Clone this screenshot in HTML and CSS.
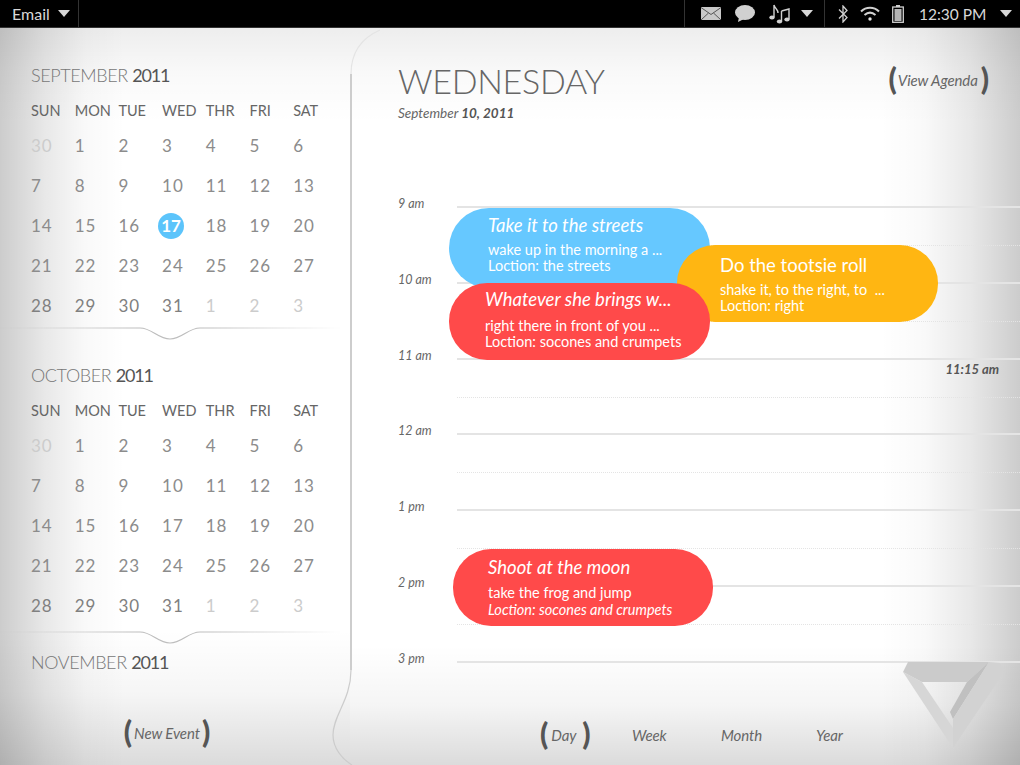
FILE: index.html
```html
<!DOCTYPE html>
<html lang="en">
<head>
    <meta charset="UTF-8">
    <title>Calendar</title>
    <link rel="stylesheet" href="styles.css">
</head>
<body>

<div class="statusbar">
    <div class="app-menu">
        <span>Email</span>
        <i class="caret"></i>
    </div>
    <div class="notifications">
        <svg class="icon" width="20" height="13" viewBox="0 0 20 13">
            <rect width="20" height="13" fill="#c9c9c9"/>
            <path d="M0 0.5 L10 7.5 L20 0.5 M0 13 L7.5 6 M20 13 L12.5 6" fill="none" stroke="#555" stroke-width="1"/>
        </svg>
        <svg class="icon" width="20" height="17" viewBox="0 0 20 17">
            <ellipse cx="10" cy="7.5" rx="10" ry="7.5" fill="#d0d0d0"/>
            <path d="M4 12 L3 17 L9 14 Z" fill="#d0d0d0"/>
        </svg>
        <svg class="icon" width="21" height="20" viewBox="0 0 21 20">
            <path d="M5 1 V13 M5 1 C6 5 9 5 9 9 M12.5 7 L20 5 V15 M12.5 7 V17" fill="none" stroke="#d0d0d0" stroke-width="1.4"/>
            <ellipse cx="3" cy="13.5" rx="2.7" ry="2" fill="#d0d0d0"/>
            <ellipse cx="10.5" cy="17.5" rx="2.7" ry="2" fill="#d0d0d0"/>
            <ellipse cx="18" cy="15.5" rx="2.7" ry="2" fill="#d0d0d0"/>
        </svg>
        <i class="caret"></i>
    </div>
    <div class="system">
        <svg class="icon" width="10" height="18" viewBox="0 0 10 18">
            <path d="M1 4.5 L9 12.5 L5 17 V1 L9 5.5 L1 13.5" fill="none" stroke="#d0d0d0" stroke-width="1.3"/>
        </svg>
        <svg class="icon" width="20" height="15" viewBox="0 0 20 15">
            <path d="M1 5.5 C6 0.5 14 0.5 19 5.5" fill="none" stroke="#d0d0d0" stroke-width="2"/>
            <path d="M4.5 9 C8 6 12 6 15.5 9" fill="none" stroke="#d0d0d0" stroke-width="2"/>
            <circle cx="10" cy="13" r="1.7" fill="#e6e6e6"/>
        </svg>
        <svg class="icon" width="12" height="18" viewBox="0 0 12 18">
            <rect x="4" y="0" width="4" height="2" fill="#d0d0d0"/>
            <rect x="0.7" y="2" width="10.6" height="15.3" fill="none" stroke="#d0d0d0" stroke-width="1.3"/>
            <rect x="2.5" y="4" width="7" height="12" fill="#b5b5b5"/>
        </svg>
        <span class="clock">12:30 PM</span>
        <i class="caret"></i>
    </div>
</div>

<div class="content">
    <div class="sidebar">
        <div class="calendar">
            <div class="month">SEPTEMBER <b>2011</b></div>
            <div class="weekdays">
                <span>SUN</span><span>MON</span><span>TUE</span><span>WED</span><span>THR</span><span>FRI</span><span>SAT</span>
            </div>
            <div class="days">
                <span class="muted">30</span><span>1</span><span>2</span><span>3</span><span>4</span><span>5</span><span>6</span>
                <span>7</span><span>8</span><span>9</span><span>10</span><span>11</span><span>12</span><span>13</span>
                <span>14</span><span>15</span><span>16</span><span class="today">17</span><span>18</span><span>19</span><span>20</span>
                <span>21</span><span>22</span><span>23</span><span>24</span><span>25</span><span>26</span><span>27</span>
                <span class="dark">28</span><span class="dark">29</span><span class="dark">30</span><span class="dark">31</span><span class="muted">1</span><span class="muted">2</span><span class="muted">3</span>
            </div>
            <svg class="divider" width="340" height="14" viewBox="0 0 340 14">
                <path d="M0 2 H140 C152 2 158 13 170 13 C182 13 188 2 200 2 H340" fill="none" stroke="#bdbdbd" stroke-width="1.2"/>
            </svg>
        </div>
        <div class="calendar">
            <div class="month">OCTOBER <b>2011</b></div>
            <div class="weekdays">
                <span>SUN</span><span>MON</span><span>TUE</span><span>WED</span><span>THR</span><span>FRI</span><span>SAT</span>
            </div>
            <div class="days">
                <span class="muted">30</span><span>1</span><span>2</span><span>3</span><span>4</span><span>5</span><span>6</span>
                <span>7</span><span>8</span><span>9</span><span>10</span><span>11</span><span>12</span><span>13</span>
                <span>14</span><span>15</span><span>16</span><span>17</span><span>18</span><span>19</span><span>20</span>
                <span>21</span><span>22</span><span>23</span><span>24</span><span>25</span><span>26</span><span>27</span>
                <span class="dark">28</span><span class="dark">29</span><span class="dark">30</span><span class="dark">31</span><span class="muted">1</span><span class="muted">2</span><span class="muted">3</span>
            </div>
            <svg class="divider divider-low" width="340" height="14" viewBox="0 0 340 14">
                <path d="M0 2 H140 C152 2 158 13 170 13 C182 13 188 2 200 2 H340" fill="none" stroke="#bdbdbd" stroke-width="1.2"/>
            </svg>
        </div>
        <div class="month month-last">NOVEMBER <b>2011</b></div>
        <div class="new-event">
            <a class="pill"><span class="paren">(</span>New Event<span class="paren">)</span></a>
        </div>
    </div>

    <div class="main">
        <div class="day-header">
            <div>
                <h1>WEDNESDAY</h1>
                <div class="date">September <b>10, 2011</b></div>
            </div>
            <a class="pill"><span class="paren">(</span>View Agenda<span class="paren">)</span></a>
        </div>

        <div class="timeline">
            <div class="hour"><span class="hour-label">9 am</span><div class="hour-track"><div class="half"></div></div></div>
            <div class="hour"><span class="hour-label">10 am</span><div class="hour-track"><div class="half"></div></div></div>
            <div class="hour"><span class="hour-label">11 am</span><div class="hour-track"><div class="half"></div></div></div>
            <div class="hour"><span class="hour-label">12 am</span><div class="hour-track"><div class="half"></div></div></div>
            <div class="hour"><span class="hour-label">1 pm</span><div class="hour-track"><div class="half"></div></div></div>
            <div class="hour"><span class="hour-label">2 pm</span><div class="hour-track"><div class="half"></div></div></div>
            <div class="hour hour-last"><span class="hour-label">3 pm</span><div class="hour-track"></div></div>

            <div class="now">11:15 am</div>

            <div class="event blue ev-streets">
                <div class="event-title italic">Take it to the streets</div>
                <div>wake up in the morning a ...</div>
                <div>Loction: the streets</div>
            </div>
            <div class="event amber ev-tootsie">
                <div class="event-title">Do the tootsie roll</div>
                <div>shake it, to the right, to &nbsp;...</div>
                <div>Loction: right</div>
            </div>
            <div class="event red ev-whatever">
                <div class="event-title italic">Whatever she brings w...</div>
                <div>right there in front of you ...</div>
                <div>Loction: socones and crumpets</div>
            </div>
            <div class="event red ev-moon">
                <div class="event-title italic">Shoot at the moon</div>
                <div>take the frog and jump</div>
                <div class="italic">Loction: socones and crumpets</div>
            </div>
        </div>

        <div class="views">
            <a class="pill view-day"><span class="paren">(</span>Day<span class="paren">)</span></a>
            <a class="view-week">Week</a>
            <a class="view-month">Month</a>
            <a class="view-year">Year</a>
        </div>
    </div>

    <svg class="panel-edge" width="60" height="737" viewBox="0 0 60 737">
        <path d="M50 2 C34 9 21 22 21 46" fill="none" stroke="#e4e4e4" stroke-width="1.2"/>
        <path d="M21 46 V642" fill="none" stroke="#cdcdcd" stroke-width="2"/>
        <path d="M21 642 C21 672 3 687 3 707 C3 720 12 731 22 737" fill="none" stroke="#cccccc" stroke-width="1.2"/>
    </svg>
    <svg class="logo" width="110" height="92" viewBox="0 0 110 92">
        <polygon points="3,12 53,88 53,68 22,22" fill="#d6d6d6"/>
        <polygon points="3,12 8,2 89,2 67,22 22,22" fill="#cbcbcb"/>
        <polygon points="67,22 50,52 53,59 89,2" fill="#c0c0c0"/>
        <polygon points="89,2 100,3 104,12 53,88 53,59" fill="#d2d2d2"/>
    </svg>
</div>

</body>
</html>
```

FILE: styles.css
```css
* {
    box-sizing: border-box;
}
html, body {
    margin: 0;
    height: 765px;
    overflow: hidden;
}
body {
    font-family: Lato, "Open Sans", sans-serif;
    color: #666;
    background: #fff;
}

/* top bar */
.statusbar {
    height: 28px;
    background: #000;
    border-bottom: 1px solid #333;
    color: #d8d8d8;
    display: flex;
    align-items: center;
    font-size: 16px;
}
.app-menu {
    width: 79px;
    height: 100%;
    padding-left: 12px;
    display: flex;
    align-items: center;
    gap: 8px;
    border-right: 1px solid #333;
}
.notifications {
    margin-left: auto;
    width: 141px;
    height: 100%;
    padding-left: 16px;
    display: flex;
    align-items: center;
    gap: 14px;
    border-left: 1px solid #333;
    border-right: 1px solid #333;
}
.notifications .caret {
    margin-left: -3px;
}
.system {
    width: 195px;
    height: 100%;
    padding-left: 13px;
    display: flex;
    align-items: center;
    gap: 12px;
}
.clock {
    margin-left: 3px;
    font-size: 15.5px;
}
.system .caret {
    margin-left: 1px;
}
.caret {
    width: 0;
    height: 0;
    border-left: 6px solid transparent;
    border-right: 6px solid transparent;
    border-top: 7px solid #d8d8d8;
}
.icon {
    flex: none;
}

.content {
    position: relative;
    height: 737px;
    display: flex;
}

/* left column */
.sidebar {
    width: 350px;
    padding-top: 35px;
    background:
        linear-gradient(90deg, rgba(0,0,0,.2), rgba(0,0,0,.09) 45px, rgba(0,0,0,.025) 85px, rgba(0,0,0,0) 125px),
        linear-gradient(180deg, rgba(0,0,0,.07), rgba(0,0,0,.025) 45px, rgba(0,0,0,0) 95px),
        linear-gradient(0deg, rgba(0,0,0,.14), rgba(0,0,0,.04) 70px, rgba(0,0,0,0) 135px);
}
.calendar {
    position: relative;
    height: 300px;
    padding-left: 31px;
}
.month {
    height: 24px;
    line-height: 24px;
    font-size: 18px;
    font-weight: 300;
    color: #777;
    letter-spacing: -0.4px;
}
.month b {
    font-weight: 400;
    color: #555;
    letter-spacing: -1.2px;
}
.month-last {
    margin: -13px 0 0 31px;
}
.weekdays, .days {
    display: grid;
    grid-template-columns: repeat(7, 43.7px);
}
.weekdays {
    margin-top: 12px;
    height: 24px;
    line-height: 24px;
    font-size: 14.5px;
    color: #666;
}
.days {
    margin-top: 3px;
    grid-auto-rows: 40px;
    font-size: 17px;
    color: #8c8c8c;
    line-height: 40px;
    letter-spacing: 1px;
}
.days .dark {
    color: #808080;
}
.days .muted {
    color: #ccc;
}
.days .today {
    width: 26px;
    height: 26px;
    margin: 7px 0 0 -4px;
    border-radius: 50%;
    background: #5cc4fb;
    color: #fff;
    font-weight: 700;
    line-height: 26px;
    text-align: center;
    letter-spacing: 0;
}
.divider {
    position: absolute;
    left: 0;
    top: 263px;
    -webkit-mask-image: linear-gradient(90deg, transparent, #000 40%, #000 60%, transparent);
    mask-image: linear-gradient(90deg, transparent, #000 40%, #000 60%, transparent);
}
.divider-low {
    top: 267px;
}
.new-event {
    margin-top: 45px;
    display: flex;
    justify-content: center;
    padding-right: 16px;
}

/* bracketed links */
.pill {
    display: inline-flex;
    align-items: center;
    gap: 2px;
    font-size: 15px;
    letter-spacing: -0.1px;
    font-style: italic;
    color: #666;
    height: 28px;
}
.paren {
    font-size: 30px;
    font-style: normal;
    font-weight: 900;
    color: #555;
    line-height: 28px;
    position: relative;
    top: -2px;
}

/* right column */
.main {
    flex: 1;
    padding: 34px 0 0 48px;
    display: flex;
    flex-direction: column;
    background:
        linear-gradient(270deg, rgba(0,0,0,.2), rgba(0,0,0,.09) 50px, rgba(0,0,0,.025) 95px, rgba(0,0,0,0) 140px),
        linear-gradient(180deg, rgba(0,0,0,.07), rgba(0,0,0,.025) 45px, rgba(0,0,0,0) 95px),
        linear-gradient(0deg, rgba(0,0,0,.14), rgba(0,0,0,.04) 60px, rgba(0,0,0,0) 120px);
}
.day-header {
    flex: none;
    height: 144px;
    display: flex;
    justify-content: space-between;
    align-items: flex-start;
    padding-right: 31px;
}
.day-header .pill {
    margin-top: 4px;
    gap: 1px;
}
.day-header .paren:last-child {
    margin-left: 2px;
}
h1 {
    margin: 0;
    font-size: 34px;
    line-height: 38px;
    font-weight: 300;
    color: #666;
    letter-spacing: -0.3px;
}
.date {
    margin-top: 5px;
    font-size: 13.5px;
    font-style: italic;
    color: #666;
}
.date b {
    font-weight: 700;
    color: #555;
}

.timeline {
    flex: none;
    position: relative;
}
.hour {
    display: flex;
    height: 75.8px;
}
.hour-last {
    height: 2px;
}
.hour-label {
    width: 59px;
    height: 16px;
    margin-top: -10px;
    font-size: 12.5px;
    font-style: italic;
    color: #666;
}
.hour-track {
    flex: 1;
    border-top: 2px solid #e4e4e4;
}
.half {
    height: 38px;
    border-bottom: 1px dotted #e4e4e4;
}
.now {
    position: absolute;
    top: 155px;
    right: 21px;
    font-size: 13px;
    font-weight: 700;
    font-style: italic;
    color: #555;
}

/* events */
.event {
    position: absolute;
    width: 261px;
    height: 77px;
    border-radius: 38px;
    padding: 5px 0 0 39px;
    color: #fff;
    font-size: 14.5px;
    line-height: 16px;
}
.event-title {
    font-size: 18.5px;
    line-height: 24px;
    margin-bottom: 5px;
}
.italic {
    font-style: italic;
}
.blue {
    background: #66c8ff;
}
.amber {
    background: #ffb612;
}
.red {
    background: #ff4a4a;
}
.ev-streets {
    left: 51px;
    top: 2px;
    height: 80px;
    border-radius: 40px;
}
.ev-tootsie {
    left: 279px;
    top: 39px;
    padding: 8px 0 0 43px;
}
.ev-whatever {
    left: 51px;
    top: 77px;
    padding: 4px 0 0 36px;
}
.ev-whatever .event-title {
    margin-bottom: 7px;
}
.ev-moon {
    left: 55px;
    top: 343px;
    width: 260px;
    padding: 6px 0 0 35px;
    line-height: 17px;
}

/* bottom switcher */
.views {
    flex: none;
    position: relative;
    margin-top: auto;
    height: 51px;
    font-size: 15px;
    letter-spacing: -0.1px;
    font-style: italic;
}
.views a {
    position: absolute;
    top: 7px;
    line-height: 28px;
}
.view-day {
    left: 142px;
    gap: 3px;
}
.view-day .paren:last-child {
    margin-left: 3px;
}
.view-week {
    left: 234px;
}
.view-month {
    left: 323px;
}
.view-year {
    left: 418px;
}

.panel-edge {
    position: absolute;
    left: 330px;
    top: 0;
}
.logo {
    position: absolute;
    left: 900px;
    top: 632px;
}
```
